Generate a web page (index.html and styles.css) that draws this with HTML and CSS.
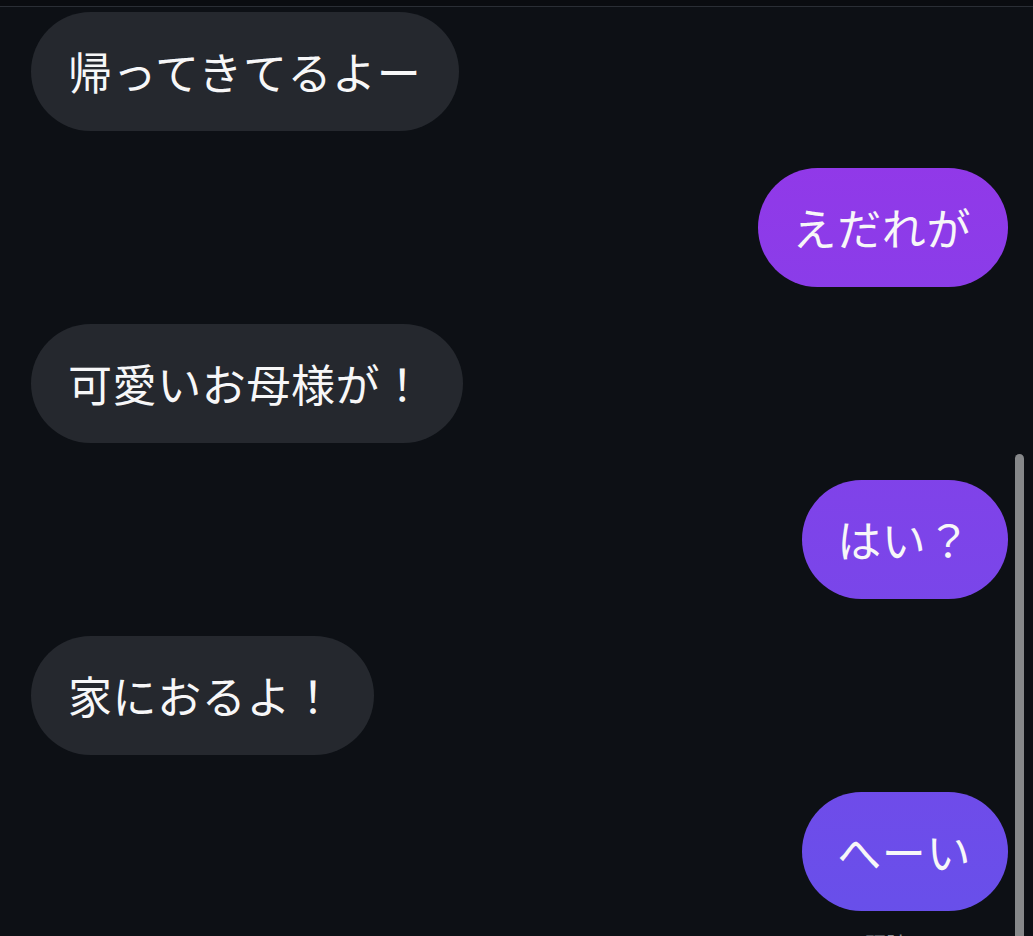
FILE: index.html
```html
<!DOCTYPE html>
<html lang="ja">
<head>
    <meta charset="UTF-8">
    <meta name="viewport" content="width=device-width, initial-scale=1.0">
    <title>Chat</title>
    <link rel="stylesheet" href="styles.css">
</head>
<body>
    <div class="top-bar"></div>

    <div class="chat">
        <div class="row left"><div class="bubble">帰ってきてるよー</div></div>
        <div class="row right"><div class="bubble">えだれが</div></div>
        <div class="row left"><div class="bubble">可愛いお母様が！</div></div>
        <div class="row right"><div class="bubble">はい？</div></div>
        <div class="row left"><div class="bubble">家におるよ！</div></div>
        <div class="row right"><div class="bubble">へーい</div></div>
        <div class="row right"><div class="meta">既読 21:04</div></div>
    </div>

    <div class="scroll-thumb"></div>
</body>
</html>
```

FILE: styles.css
```css
* {
    margin: 0;
    padding: 0;
    box-sizing: border-box;
}

body {
    height: 100vh;
    overflow: hidden;
    background-color: #0d1015;
    font-family: 'Noto Sans CJK JP', 'Noto Sans', sans-serif;
    color: #f7f7f8;
}

.top-bar {
    height: 7px;
    background-color: #0a0c10;
    border-bottom: 1px solid #2a2e35;
}

.chat {
    display: flex;
    flex-direction: column;
    gap: 37px;
    padding: 5px 25px 0 31px;
}

.row {
    display: flex;
}

.row.right {
    justify-content: flex-end;
}

.bubble {
    height: 119px;
    font-size: 44px;
    line-height: 53px;
    padding: 33px 37px;
    border-radius: 60px;
    white-space: nowrap;
    letter-spacing: 0.6px;
}

.left .bubble {
    background-color: #25282e;
    padding-right: 38px;
}

.right .bubble {
    background-image: linear-gradient(180deg, #9a34e8 0%, #6750ea 100%);
    background-attachment: fixed;
    padding-left: 35px;
}

.meta {
    margin-top: -21px;
    padding-right: 40px;
    font-size: 22px;
    color: #8b8f96;
}

/* Overlay scrollbar */
.scroll-thumb {
    position: absolute;
    top: 454px;
    right: 9px;
    width: 9px;
    height: 500px;
    border-radius: 5px;
    background-color: #86888a;
}
```
